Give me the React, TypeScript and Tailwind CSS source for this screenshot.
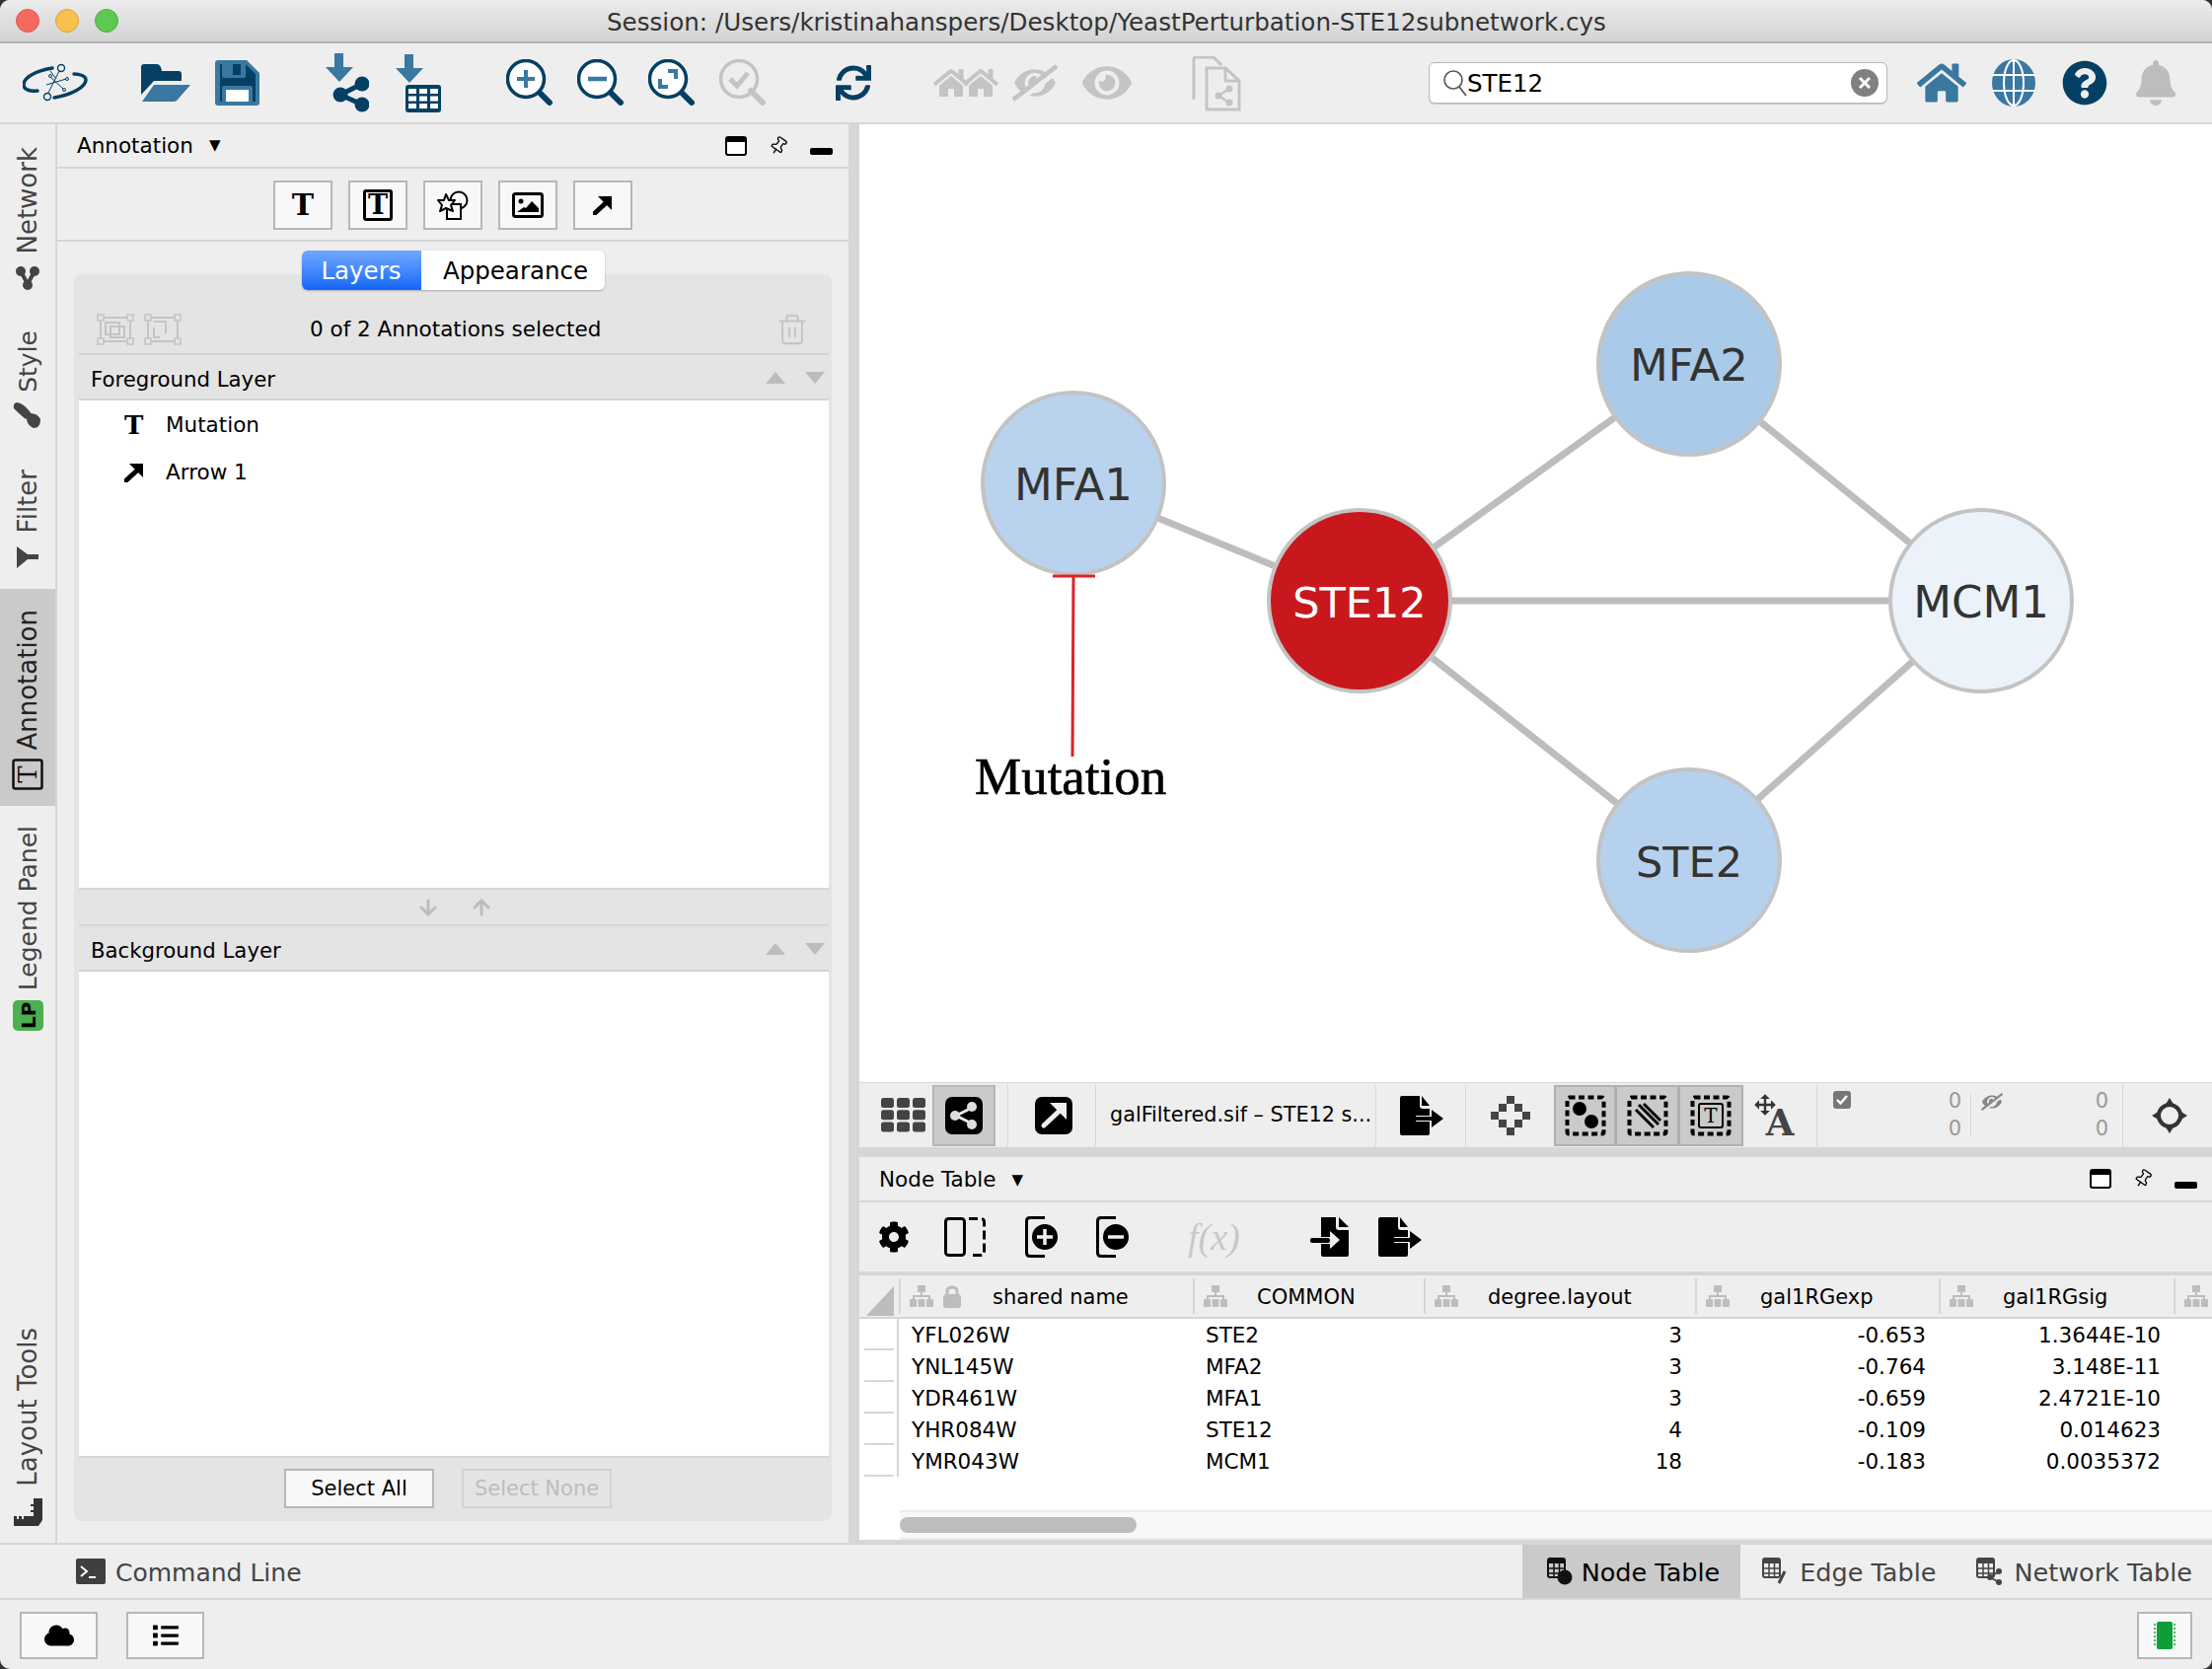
import type { ReactNode } from "react";
import { ArrowDown, ArrowUp, Pin, Trash2 } from "lucide-react";
import {
  FaBell,
  FaCloud,
  FaCog,
  FaEye,
  FaEyeSlash,
  FaHome,
  FaList,
  FaQuestionCircle,
  FaSync,
} from "react-icons/fa";

const DARK = "#053f64";
const LIGHT = "#3a78a1";
const GRAY = "#c4c4c4";

function Icon({
  w,
  h,
  className = "",
  children,
}: {
  w: number;
  h: number;
  className?: string;
  children: ReactNode;
}) {
  return (
    <svg width={w} height={h} viewBox={`0 0 ${w} ${h}`} className={`shrink-0 ${className}`}>
      {children}
    </svg>
  );
}

function Logo({ className }: { className?: string }) {
  return (
    <Icon w={66} h={40} className={className}>
      <path d="M30 5 C12 8 1 15 1 22 C1 27 8 29 15 28" fill="none" stroke={DARK} strokeWidth="3.5" strokeLinecap="round" />
      <path d="M32 35 C50 32 64 24 64 17 C64 13 58 11 52 11" fill="none" stroke={DARK} strokeWidth="3.5" strokeLinecap="round" />
      <path d="M25 32 L38 6 M28 14 L41 26 M24 22 L44 16 M34 16 L28 8" stroke={DARK} strokeWidth="1" fill="none" />
      <circle cx="39" cy="5" r="3.5" fill="#eee" stroke={DARK} strokeWidth="1.4" />
      <circle cx="25" cy="34" r="3.5" fill="#eee" stroke={DARK} strokeWidth="1.4" />
      <circle cx="28" cy="13" r="1.5" fill="#eee" stroke={DARK} />
      <circle cx="42" cy="27" r="1.5" fill="#eee" stroke={DARK} />
      <circle cx="45" cy="16" r="1.5" fill="#eee" stroke={DARK} />
    </Icon>
  );
}

function FolderIcon({ className }: { className?: string }) {
  return (
    <Icon w={50} h={38} className={className}>
      <path d="M0 3 Q0 0 3 0 H16 Q20 0 21 7 H38 Q41 7 41 10 V17 H13 L0 31 Z" fill={DARK} />
      <path d="M13 21 H50 L37 36 Q36 38 33 38 H1 Z" fill={LIGHT} />
    </Icon>
  );
}

function SaveIcon({ className }: { className?: string }) {
  return (
    <Icon w={45} h={46} className={className}>
      <path d="M3 0 H32 L45 13 V43 Q45 46 42 46 H3 Q0 46 0 43 V3 Q0 0 3 0 Z" fill={LIGHT} />
      <path d="M5 4 H31 L41 14 V42 H5 Z" fill={DARK} />
      <rect x="7" y="0" width="24" height="18" rx="2" fill={LIGHT} />
      <rect x="18" y="4" width="8" height="11" fill={DARK} />
      <rect x="7" y="26" width="31" height="20" rx="2" fill={LIGHT} />
      <rect x="11" y="30" width="23" height="12" fill="#fff" />
    </Icon>
  );
}

function DownArrow({ x = 0, y = 0 }: { x?: number; y?: number }) {
  return <path d={`M${x + 9} ${y} H${x + 18} V${y + 14} H${x + 28} L${x + 14} ${y + 29} L${x} ${y + 14} H${x + 9} Z`} fill={LIGHT} />;
}

function ImportNetworkIcon({ className }: { className?: string }) {
  return (
    <Icon w={44} h={60} className={className}>
      <DownArrow />
      <path d="M15 42 L37 31 M15 42 L37 52" stroke={DARK} strokeWidth="5" />
      <circle cx="15" cy="42" r="7.5" fill={DARK} />
      <circle cx="37" cy="31" r="7.5" fill={DARK} />
      <circle cx="37" cy="52" r="7.5" fill={DARK} />
    </Icon>
  );
}

function ImportTableIcon({ className }: { className?: string }) {
  const cells = [0, 1, 2];
  return (
    <Icon w={47} h={60} className={className}>
      <DownArrow />
      <rect x="10" y="31" width="36" height="28" rx="3" fill={DARK} />
      {cells.map((r) =>
        cells.map((c) => <rect key={`${r}${c}`} x={13 + c * 11} y={35 + r * 7.5} width="8" height="5" fill="#fff" />),
      )}
    </Icon>
  );
}

function Magnifier({ color, className, children }: { color: string; className?: string; children: ReactNode }) {
  return (
    <Icon w={48} h={48} className={className}>
      <path d="M32 32 L44 44" stroke={color} strokeWidth="6" strokeLinecap="round" />
      <circle cx="20" cy="20" r="18.5" fill={color === DARK ? "#fff" : "none"} stroke={color} strokeWidth="3.5" />
      {children}
    </Icon>
  );
}

function GlobeIcon({ className }: { className?: string }) {
  return (
    <Icon w={46} h={48} className={className}>
      <ellipse cx="23" cy="24" rx="22" ry="24" fill={LIGHT} />
      <ellipse cx="23" cy="24" rx="10" ry="23" fill="none" stroke="#fff" strokeWidth="2" />
      <path d="M23 0 V48 M1 16 H45 M1 32 H45" stroke="#fff" strokeWidth="2" />
    </Icon>
  );
}

function DocShareIcon({ className }: { className?: string }) {
  return (
    <Icon w={50} h={56} className={className}>
      <path d="M2 44 V3 Q2 1 4 1 H22 L30 9" fill="none" stroke={GRAY} strokeWidth="3" />
      <path d="M15 12 H34 L48 25 V54 H15 Z" fill="#eee" stroke={GRAY} strokeWidth="3" />
      <path d="M34 12 V25 H48" fill="none" stroke={GRAY} strokeWidth="3" />
      <path d="M27 40 L38 33 M27 40 L38 47" stroke={GRAY} strokeWidth="2.5" />
      <circle cx="27" cy="40" r="3.5" fill={GRAY} />
      <circle cx="38" cy="33" r="3.5" fill={GRAY} />
      <circle cx="38" cy="47" r="3.5" fill={GRAY} />
    </Icon>
  );
}

function MainToolbar() {
  return (
    <div className="flex h-[82px] shrink-0 items-center border-b-2 border-[#d6d6d6] bg-[#eeeeee]">
      <Logo className="ml-[23px]" />
      <FolderIcon className="ml-[54px]" />
      <SaveIcon className="ml-[25px]" />
      <ImportNetworkIcon className="ml-[67px]" />
      <ImportTableIcon className="ml-[27px] mt-[2px]" />
      <Magnifier color={DARK} className="ml-[65px]">
        <path d="M20 11 V29 M11 20 H29" stroke={LIGHT} strokeWidth="4" />
      </Magnifier>
      <Magnifier color={DARK} className="ml-[24px]">
        <path d="M11 20 H30" stroke={LIGHT} strokeWidth="4.5" />
      </Magnifier>
      <Magnifier color={DARK} className="ml-[24px]">
        <path d="M20 12 H28 V20 M12 20 V28 H20" fill="none" stroke={LIGHT} strokeWidth="4" />
      </Magnifier>
      <Magnifier color={GRAY} className="ml-[24px]">
        <path d="M11 20 L18 27 L29 14" fill="none" stroke={GRAY} strokeWidth="5" />
      </Magnifier>
      <FaSync size={36} color={DARK} className="ml-[70px] shrink-0" />
      <div className="ml-[63px] flex w-[66px] shrink-0">
        <FaHome size={36} color={GRAY} className="shrink-0" />
        <FaHome size={36} color={GRAY} className="-ml-[6px] shrink-0" />
      </div>
      <FaEyeSlash size={46} color={GRAY} className="ml-[14px] shrink-0 -scale-x-100" />
      <FaEye size={50} color={GRAY} className="ml-[25px] shrink-0" />
      <DocShareIcon className="ml-[61px] mt-[2px]" />
      <div className="ml-[190px] flex h-[42px] w-[465px] shrink-0 items-center rounded-[6px] border border-[#b8b8b8] bg-white pl-[12px] pr-[8px] shadow-[0_1px_0_#ccc]">
        <svg width="28" height="32" viewBox="0 0 28 32" className="shrink-0">
          <circle cx="12" cy="13" r="9" fill="none" stroke="#555" strokeWidth="1.6" />
          <path d="M18 20 L25 29" stroke="#555" strokeWidth="1.8" />
        </svg>
        <span className="-ml-[2px] pt-[2px] text-[24.5px] leading-none text-black">STE12</span>
        <span className="relative ml-auto flex h-[28px] w-[28px] items-center justify-center rounded-full bg-[#808080]">
          <svg width="14" height="14" viewBox="0 0 14 14">
            <path d="M2 2 L12 12 M12 2 L2 12" stroke="#fff" strokeWidth="3" />
          </svg>
        </span>
      </div>
      <FaHome size={50} color={LIGHT} className="ml-[30px] shrink-0" />
      <GlobeIcon className="ml-[25px]" />
      <FaQuestionCircle size={46} color={DARK} className="ml-[26px] shrink-0" />
      <FaBell size={46} color="#bdbdbd" className="ml-[26px] shrink-0" />
    </div>
  );
}

function RailTab({
  label,
  icon,
  className = "",
  textClass = "text-[26px] text-[#444]",
}: {
  label: string;
  icon: ReactNode;
  className?: string;
  textClass?: string;
}) {
  return (
    <div className={`flex shrink-0 flex-col-reverse items-center ${className}`}>
      {icon}
      <span className={`rotate-180 whitespace-nowrap leading-none [writing-mode:vertical-rl] ${textClass}`}>{label}</span>
    </div>
  );
}

function Rail() {
  return (
    <div className="flex w-[58px] shrink-0 flex-col border-r-2 border-[#d6d6d6] bg-[#eeeeee]">
      <RailTab
        label="Network"
        className="mt-[24px] h-[144px] gap-[12px]"
        icon={
          <Icon w={26} h={24} className="shrink-0">
            <path d="M6 5 L13 18 M20 5 L13 18" stroke="#444" strokeWidth="4" />
            <circle cx="6" cy="5" r="5" fill="#444" />
            <circle cx="20" cy="5" r="5" fill="#444" />
            <circle cx="13" cy="19" r="5" fill="#444" />
          </Icon>
        }
      />
      <RailTab
        label="Style"
        textClass="text-[25px] text-[#444]"
        className="mt-[42px] h-[98px] gap-[10px]"
        icon={
          <Icon w={30} h={26} className="shrink-0">
            <path d="M3 0 Q10 0 17 9 L19 12 L13 17 Q7 12 1 6 Q0 2 3 0 Z" fill="#444" />
            <path d="M18 11 Q25 11 28 17 Q28 26 21 26 Q14 23 14 16 Z" fill="#444" />
          </Icon>
        }
      />
      <RailTab
        label="Filter"
        className="mt-[42px] h-[100px] gap-[14px]"
        icon={
          <Icon w={22} h={22} className="shrink-0">
            <path d="M0 0 L11 8 H22 V13 H11 L0 22 Z" fill="#444" />
          </Icon>
        }
      />
      <RailTab
        label="Annotation"
        textClass="text-[26px] text-[#222]"
        className="mt-[21px] h-[220px] gap-[8px] bg-[#cacaca] pb-[16px]"
        icon={
          <Icon w={32} h={32} className="shrink-0">
            <rect x="1.5" y="1.5" width="29" height="29" rx="2" fill="none" stroke="#111" strokeWidth="2.5" />
            <text x="16" y="16" fontSize="26" fontFamily="'DejaVu Serif', serif" fill="#111" textAnchor="middle" transform="rotate(-90 16 16)" dominantBaseline="central">
              T
            </text>
          </Icon>
        }
      />
      <RailTab
        label="Legend Panel"
        textClass="text-[25px] text-[#444]"
        className="mt-[24px] h-[204px] gap-[10px]"
        icon={
          <span className="flex h-[31px] w-[31px] shrink-0 rotate-180 items-center justify-center rounded-[5px] bg-[#4caf50] text-[20px] font-bold leading-none text-black [writing-mode:vertical-rl]">
            LP
          </span>
        }
      />
      <RailTab
        label="Layout Tools"
        className="mb-[17px] mt-auto h-[200px] gap-[12px]"
        icon={
          <Icon w={29} h={28} className="shrink-0">
            <path d="M0 28 V18 H3 V21 H5 V18 H8 V21 H10 V18 H20 V14 H17 V12 H20 V8 H17 V6 H20 V0 H29 V22 L25 28 Z" fill="#333" />
          </Icon>
        }
      />
    </div>
  );
}

function WindowControls({ className = "" }: { className?: string }) {
  return (
    <div className={`flex items-center ${className}`}>
      <Icon w={22} h={20}>
        <rect x="1" y="1" width="20" height="18" rx="2" fill="#fff" stroke="#000" strokeWidth="2" />
        <rect x="1" y="1" width="20" height="5" fill="#000" />
      </Icon>
      <Pin size={20} strokeWidth={1.6} color="#000" className="ml-[22px] rotate-[35deg]" />
      <span className="ml-[22px] mt-[12px] block h-[7px] w-[23px] rounded-[2px] bg-black" />
    </div>
  );
}

function ToolButton({ children }: { children: ReactNode }) {
  return (
    <div className="flex h-[50px] w-[60px] items-center justify-center border-2 border-[#b7b7b7] bg-[#f8f8f8]">
      {children}
    </div>
  );
}

const serifT = "font-['DejaVu_Serif',serif] font-bold text-black leading-none";

function ArrowGlyph({ size = 20 }: { size?: number }) {
  return (
    <svg width={size} height={size} viewBox="0 0 20 20">
      <path d="M2 18 L15 6" stroke="#000" strokeWidth="5" strokeLinecap="round" />
      <path d="M5 1 H19 V15 Z" fill="#000" />
    </svg>
  );
}

function LayerHeader({ title }: { title: string }) {
  return (
    <div className="flex h-[46px] shrink-0 items-center border-b-2 border-[#d2d2d2] pl-[12px] pr-[4px] text-[21.25px] leading-none text-black">
      <span className="mt-[6px]">{title}</span>
      <span className="ml-auto mt-[2px] h-0 w-0 border-x-[10px] border-b-[12px] border-x-transparent border-b-[#bcbcbc]" />
      <span className="ml-[20px] mt-[2px] h-0 w-0 border-x-[10px] border-t-[12px] border-x-transparent border-t-[#bcbcbc]" />
    </div>
  );
}

function GroupIcon({ ungroup, className = "" }: { ungroup?: boolean; className?: string }) {
  return (
    <Icon w={38} h={32} className={className}>
      <rect x="4" y="4" width="30" height="24" fill="none" stroke={GRAY} strokeWidth="2" />
      {[
        [1, 1],
        [31, 1],
        [1, 25],
        [31, 25],
      ].map(([x, y]) => (
        <rect key={`${x}${y}`} x={x} y={y} width="6" height="6" fill="#e4e4e4" stroke={GRAY} strokeWidth="1.5" />
      ))}
      {ungroup ? (
        <path d="M10 8 H22 V20 M16 24 H10 V14" fill="none" stroke={GRAY} strokeWidth="2" />
      ) : (
        <>
          <rect x="9" y="9" width="14" height="12" fill="none" stroke={GRAY} strokeWidth="2" />
          <rect x="14" y="13" width="14" height="11" fill="none" stroke={GRAY} strokeWidth="2" />
        </>
      )}
    </Icon>
  );
}

function AnnotationPanel() {
  return (
    <div className="flex w-[802px] shrink-0 flex-col bg-[#eeeeee]">
      <div className="flex h-[45px] shrink-0 items-center border-b-2 border-[#d6d6d6] pl-[20px] pr-[16px] text-[21.500px] leading-none text-black">
        <span>Annotation</span>
        <span className="ml-[16px] text-[15px]">▼</span>
        <WindowControls className="ml-auto" />
      </div>
      <div className="flex h-[74px] shrink-0 items-center justify-center gap-[16px] border-b-2 border-[#d6d6d6] pt-[1px]">
        <ToolButton>
          <span className={`text-[30px] ${serifT}`}>T</span>
        </ToolButton>
        <ToolButton>
          <span className={`flex h-[32px] w-[30px] items-center justify-center rounded-[3px] border-[3px] border-black text-[27px] ${serifT}`}>T</span>
        </ToolButton>
        <ToolButton>
          <Icon w={32} h={30}>
            <circle cx="22" cy="10" r="8.5" fill="none" stroke="#000" strokeWidth="2" />
            <rect x="10" y="14" width="14" height="15" fill="#f8f8f8" stroke="#000" strokeWidth="2" />
            <path d="M9 4 L12 10 L18 10 L14 15 L16 21 L9 18 L3 21 L5 15 L1 10 L7 10 Z" fill="#f8f8f8" stroke="#000" strokeWidth="2" strokeLinejoin="round" />
          </Icon>
        </ToolButton>
        <ToolButton>
          <Icon w={32} h={26}>
            <rect x="1.5" y="1.5" width="29" height="23" rx="2" fill="none" stroke="#000" strokeWidth="3" />
            <circle cx="9" cy="9" r="2.5" fill="#000" />
            <path d="M5 20 L12 15 L14 16 L20 9 L27 16 V20 Z" fill="#000" />
          </Icon>
        </ToolButton>
        <ToolButton>
          <ArrowGlyph />
        </ToolButton>
      </div>
      <div className="flex min-h-0 flex-1 flex-col px-[17px] pb-[22px] pt-[9px]">
        <div className="relative z-10 -mb-[16px] flex h-[40px] w-[307px] shrink-0 self-center overflow-hidden rounded-[6px] text-[24.5px] leading-none shadow-[0_1px_2px_#aaa]">
          <span className="flex w-[121px] items-center justify-center bg-gradient-to-b from-[#6fa8ff] to-[#0f66f6] pt-[2px] text-white">Layers</span>
          <span className="flex flex-1 items-center justify-center bg-white pl-[6px] pt-[2px] text-black">Appearance</span>
        </div>
        <div className="flex min-h-0 flex-1 flex-col rounded-[8px] bg-[#e4e4e4] pl-[5px] pr-[3px] pt-[32px]">
          <div className="flex h-[50px] shrink-0 items-center border-b-2 border-[#d2d2d2] pl-[18px] pr-[20px] text-[21.500px] leading-none text-black">
            <GroupIcon />
            <GroupIcon ungroup className="ml-[10px]" />
            <span className="ml-[130px]">0 of 2 Annotations selected</span>
            <Trash2 size={34} strokeWidth={1.4} color={GRAY} className="ml-auto" />
          </div>
          <LayerHeader title="Foreground Layer" />
          <div className="h-[494px] shrink-0 bg-white pl-[46px] pt-[1px] text-[21.500px] leading-none text-black">
            <div className="flex h-[47px] items-center">
              <span className={`w-[42px] text-[26px] ${serifT}`}>T</span>
              <span>Mutation</span>
            </div>
            <div className="flex h-[49px] items-center">
              <span className="w-[42px]">
                <ArrowGlyph />
              </span>
              <span>Arrow 1</span>
            </div>
          </div>
          <div className="flex h-[37px] shrink-0 items-center border-t-2 border-[#d6d6d6] pl-[342px]">
            <ArrowDown size={24} strokeWidth={3} color="#bcbcbc" />
            <ArrowUp size={24} strokeWidth={3} color="#bcbcbc" className="ml-[30px]" />
          </div>
          <div className="border-t-2 border-[#d6d6d6]">
            <LayerHeader title="Background Layer" />
          </div>
          <div className="min-h-0 flex-1 border-b-2 border-[#d6d6d6] bg-white" />
          <div className="flex h-[64px] shrink-0 items-center pb-[2px] pl-[208px] text-[21px] leading-none">
            <span className="flex h-[40px] w-[152px] items-center justify-center border-2 border-[#b7b7b7] bg-[#f8f8f8] text-black">Select All</span>
            <span className="ml-[28px] flex h-[40px] w-[152px] items-center justify-center border-2 border-[#d2d2d2] text-[#bdbdbd]">Select None</span>
          </div>
        </div>
      </div>
    </div>
  );
}

const nodes = [
  { label: "MFA1", x: 1088, y: 490, fill: "#b9d3ee", size: 45 },
  { label: "MFA2", x: 1712, y: 369, fill: "#a9cbe9", size: 45 },
  { label: "STE2", x: 1712, y: 872, fill: "#b6d1ee", size: 43 },
  { label: "MCM1", x: 2008, y: 609, fill: "#ebf2fa", size: 45 },
  { label: "STE12", x: 1378, y: 609, fill: "#c9171e", size: 43 },
];

const edges = [
  [1088, 490, 1378, 609],
  [1378, 609, 1712, 369],
  [1378, 609, 2008, 609],
  [1378, 609, 1712, 872],
  [1712, 369, 2008, 609],
  [1712, 872, 2008, 609],
];

function NetworkCanvas() {
  return (
    <div className="h-[971px] shrink-0 bg-white">
      <svg width="1371" height="971" viewBox="871 126 1371 971" className="block">
        {edges.map(([x1, y1, x2, y2]) => (
          <line key={`${x1}${y1}${x2}${y2}`} x1={x1} y1={y1} x2={x2} y2={y2} stroke="#bdbdbd" strokeWidth="7" />
        ))}
        {nodes.map((n) => (
          <g key={n.label}>
            <circle cx={n.x} cy={n.y} r="92" fill={n.fill} stroke="#c3c3c3" strokeWidth="4" />
            <text
              x={n.x}
              y={n.y + 17}
              textAnchor="middle"
              fontSize={n.size}
              fontFamily="'DejaVu Sans', sans-serif"
              fill={n.label === "STE12" ? "#ffffff" : "#333333"}
            >
              {n.label}
            </text>
          </g>
        ))}
        <path d="M1088 584 L1087 767 M1067 584 H1110" stroke="#e0202c" strokeWidth="3" fill="none" />
        <text x="988" y="805" fontSize="53" fontFamily="'Liberation Serif', serif" fill="#000" stroke="#000" strokeWidth="0.6">
          Mutation
        </text>
      </svg>
    </div>
  );
}

function ExportIcon({ className = "" }: { className?: string }) {
  return (
    <Icon w={44} h={40} className={className}>
      <path d="M2 0 H20 V10 Q20 13 23 13 H30 V20 H16 V26 H30 V38 Q30 40 28 40 H2 Q0 40 0 38 V2 Q0 0 2 0 Z" fill="#000" />
      <path d="M22 0 L30 10 H22 Z" fill="#000" />
      <path d="M16 21 H32 V14 L44 23 L32 32 V25 H16 Z" fill="#000" />
    </Icon>
  );
}

function ImportIcon({ className = "" }: { className?: string }) {
  return (
    <Icon w={40} h={40} className={className}>
      <path d="M11 0 H26 V10 Q26 13 29 13 H39 V38 Q39 40 37 40 H13 Q11 40 11 38 V27 H20 V32 L30 23 L20 14 V20 H11 Z" fill="#000" />
      <path d="M29 0 L39 10 H29 Z" fill="#000" />
      <rect x="0" y="21" width="20" height="5" rx="2" fill="#000" />
    </Icon>
  );
}

function Separator({ className = "" }: { className?: string }) {
  return <span className={`block h-[62px] w-[1px] shrink-0 bg-[#d6d6d6] ${className}`} />;
}

function DashedBox({ children }: { children: ReactNode }) {
  return (
    <Icon w={42} h={42}>
      <rect x="2.5" y="2.5" width="37" height="37" rx="2" fill="none" stroke="#000" strokeWidth="4" strokeDasharray="6 3.5" />
      {children}
    </Icon>
  );
}

function ViewToolbar() {
  const grid = [0, 1, 2];
  return (
    <div className="flex h-[66px] shrink-0 items-center overflow-hidden border-t border-[#d6d6d6] bg-[#eeeeee]">
      <Icon w={45} h={36} className="ml-[22px]">
        {grid.map((r) =>
          grid.map((c) => <rect key={`${r}${c}`} x={c * 16} y={r * 12.3} width="13" height="10" rx="2.5" fill="#444" />),
        )}
      </Icon>
      <div className="ml-[7px] flex h-[62px] w-[64px] shrink-0 items-center justify-center border-2 border-[#b5b5b5] bg-[#cacaca]">
        <Icon w={38} h={38}>
          <rect width="38" height="38" rx="7" fill="#000" />
          <path d="M11 19 L27 11 M11 19 L27 27" stroke="#eee" strokeWidth="3" />
          <circle cx="10" cy="19" r="5" fill="#ddd" />
          <circle cx="27" cy="10" r="5" fill="#ddd" />
          <circle cx="27" cy="28" r="5" fill="#ddd" />
        </Icon>
      </div>
      <Separator className="ml-[12px]" />
      <Icon w={38} h={38} className="ml-[27px]">
        <rect width="38" height="38" rx="7" fill="#000" />
        <path d="M9 29 L26 13" stroke="#eee" strokeWidth="5" strokeLinecap="round" />
        <path d="M15 6 H32 V23 Z" fill="#eee" />
      </Icon>
      <Separator className="ml-[23px]" />
      <span className="ml-[14px] w-[269px] shrink-0 whitespace-nowrap text-[20.75px] leading-none text-black">galFiltered.sif – STE12 s...</span>
      <Separator />
      <ExportIcon className="ml-[24px]" />
      <Separator className="ml-[22px]" />
      <Icon w={40} h={40} className="ml-[25px]">
        {[
          [16, 0],
          [8, 8],
          [24, 8],
          [0, 16],
          [32, 16],
          [8, 24],
          [24, 24],
          [16, 32],
        ].map(([x, y]) => (
          <rect key={`${x}${y}`} x={x} y={y} width="8" height="8" fill="#444" />
        ))}
      </Icon>
      <div className="ml-[24px] flex h-[62px] w-[192px] shrink-0 border-2 border-[#b0b0b0] bg-[#cacaca]">
        <div className="flex w-[62px] items-center justify-center border-r-[3px] border-[#b0b0b0]">
          <DashedBox>
            <circle cx="15" cy="14" r="7" fill="#000" />
            <circle cx="27" cy="27" r="7" fill="#000" />
          </DashedBox>
        </div>
        <div className="flex w-[64px] items-center justify-center border-r-[3px] border-[#b0b0b0]">
          <DashedBox>
            <path d="M9 15 L27 33 M12 10 L32 30 M17 9 L34 26" stroke="#000" strokeWidth="3" />
          </DashedBox>
        </div>
        <div className="flex flex-1 items-center justify-center">
          <DashedBox>
            <rect x="9" y="9" width="24" height="24" rx="2" fill="none" stroke="#000" strokeWidth="2" />
            <text x="21" y="28" textAnchor="middle" fontSize="20" fontFamily="'DejaVu Serif', serif" fill="#000">
              T
            </text>
          </DashedBox>
        </div>
      </div>
      <Icon w={42} h={46} className="ml-[10px]">
        <path transform="scale(1.2)" d="M10 1 L14 5 H11 V9 H15 V6 L19 10 L15 14 V11 H11 V15 H14 L10 19 L6 15 H9 V11 H5 V14 L1 10 L5 6 V9 H9 V5 H6 Z" fill="#333" />
        <text x="27" y="43" textAnchor="middle" fontSize="37" fontWeight="700" fontFamily="'DejaVu Serif', serif" fill="#444">
          A
        </text>
      </Icon>
      <Separator className="ml-[22px]" />
      <div className="ml-[16px] mt-[8px] flex h-[18px] w-[18px] shrink-0 items-center justify-center self-start rounded-[3px] bg-[#777]">
        <svg width="12" height="10" viewBox="0 0 12 10">
          <path d="M1 5 L4.5 8.5 L11 1" fill="none" stroke="#fff" strokeWidth="2.4" />
        </svg>
      </div>
      <div className="flex w-[112px] shrink-0 flex-col items-end gap-[7px] text-[21px] leading-[21px] text-[#9a9a9a]">
        <span>0</span>
        <span>0</span>
      </div>
      <span className="ml-[9px] block h-[44px] w-[1px] shrink-0 bg-[#d6d6d6]" />
      <FaEyeSlash size={22} color="#888" className="mb-[28px] ml-[10px] shrink-0 -scale-x-100" />
      <div className="flex w-[107px] shrink-0 flex-col items-end gap-[7px] text-[21px] leading-[21px] text-[#9a9a9a]">
        <span>0</span>
        <span>0</span>
      </div>
      <Separator className="ml-[14px]" />
      <Icon w={36} h={36} className="ml-[29px]">
        <circle cx="18" cy="18" r="11" fill="none" stroke="#333" strokeWidth="4" />
        <path d="M18 0 L23 8 H13 Z M18 36 L23 28 H13 Z M0 18 L8 13 V23 Z M36 18 L28 13 V23 Z" fill="#333" />
      </Icon>
    </div>
  );
}

function TreeIcon({ className = "" }: { className?: string }) {
  return (
    <Icon w={24} h={22} className={className}>
      <rect x="8" y="0" width="8" height="7" fill="#bdbdbd" />
      <path d="M12 7 V12 M4 15 V11 H20 V15" stroke="#bdbdbd" strokeWidth="2" fill="none" />
      <rect x="0" y="14" width="7" height="8" rx="1" fill="#bdbdbd" />
      <rect x="8.5" y="14" width="7" height="8" rx="1" fill="#bdbdbd" />
      <rect x="17" y="14" width="7" height="8" rx="1" fill="#bdbdbd" />
    </Icon>
  );
}

const columns = [
  { label: "shared name", cls: "w-[298px]", labelCls: "ml-[32px] mt-[3px]", lock: true },
  { label: "COMMON", cls: "w-[234px]", labelCls: "ml-[30px] mt-[3px]" },
  { label: "degree.layout", cls: "w-[275px]", labelCls: "ml-[30px] mt-[3px]" },
  { label: "gal1RGexp", cls: "w-[247px]", labelCls: "ml-[31px] mt-[3px]" },
  { label: "gal1RGsig", cls: "w-[238px]", labelCls: "ml-[30px] mt-[3px]" },
  { label: "", cls: "flex-1", labelCls: "" },
];

const rows = [
  ["YFL026W", "STE2", "3", "-0.653", "1.3644E-10"],
  ["YNL145W", "MFA2", "3", "-0.764", "3.148E-11"],
  ["YDR461W", "MFA1", "3", "-0.659", "2.4721E-10"],
  ["YHR084W", "STE12", "4", "-0.109", "0.014623"],
  ["YMR043W", "MCM1", "18", "-0.183", "0.0035372"],
];

function NodeTable() {
  return (
    <>
      <div className="flex h-[46px] shrink-0 items-center border-b-2 border-[#d6d6d6] bg-[#eeeeee] pl-[20px] pr-[15px] text-[21.500px] leading-none text-black">
        <span className="mt-[2px]">Node Table</span>
        <span className="ml-[16px] mt-[2px] text-[15px]">▼</span>
        <WindowControls className="ml-auto" />
      </div>
      <div className="flex h-[70px] shrink-0 items-center bg-[#eeeeee]">
        <FaCog size={32} color="#000" className="ml-[19px] shrink-0" />
        <Icon w={42} h={40} className="ml-[35px]">
          <rect x="1.5" y="1.5" width="19" height="37" rx="3" fill="none" stroke="#000" strokeWidth="3" />
          <path d="M25 1.5 H37 Q40.5 1.5 40.5 5 V35 Q40.5 38.5 37 38.5 H25" fill="none" stroke="#000" strokeWidth="3" strokeDasharray="9 4" />
        </Icon>
        <Icon w={34} h={42} className="ml-[40px]">
          <path d="M20 1.5 H5 Q1.5 1.5 1.5 5 V37 Q1.5 40.5 5 40.5 H20" fill="none" stroke="#000" strokeWidth="3" />
          <circle cx="20" cy="21" r="13" fill="#000" />
          <path d="M20 13 V29 M12 21 H28" stroke="#eee" strokeWidth="3.5" />
        </Icon>
        <Icon w={34} h={42} className="ml-[38px]">
          <path d="M20 1.5 H5 Q1.5 1.5 1.5 5 V37 Q1.5 40.5 5 40.5 H20" fill="none" stroke="#000" strokeWidth="3" />
          <circle cx="20" cy="21" r="13" fill="#000" />
          <path d="M12 21 H28" stroke="#eee" strokeWidth="3.5" />
        </Icon>
        <span className="ml-[59px] w-[60px] shrink-0 font-['Liberation_Serif',serif] text-[38px] italic leading-none text-[#c8c8c8]">f(x)</span>
        <ImportIcon className="ml-[64px]" />
        <ExportIcon className="ml-[29px]" />
      </div>
      <div className="h-[4px] shrink-0 bg-[#d6d6d6]" />
      <div className="flex h-[44px] shrink-0 items-center border-b-2 border-[#d6d6d6] bg-[#eeeeee] pl-[1px] text-[21px] leading-none text-black">
        <div className="flex w-[39px] shrink-0 items-end justify-center self-stretch pb-[1px]">
          <span className="block h-0 w-0 border-b-[30px] border-l-[28px] border-b-[#bcbcbc] border-l-transparent" />
        </div>
        {columns.map((c) => (
          <div key={c.label} className={`flex h-[36px] shrink-0 items-center border-l-2 border-[#d6d6d6] pl-[9px] ${c.cls}`}>
            <TreeIcon />
            {c.lock && (
              <Icon w={18} h={23} className="ml-[10px]">
                <rect x="0" y="9" width="18" height="14" rx="3" fill="#bdbdbd" />
                <path d="M4 10 V6 Q4 2 9 2 Q14 2 14 6 V10" fill="none" stroke="#bdbdbd" strokeWidth="3" />
              </Icon>
            )}
            <span className={c.labelCls}>{c.label}</span>
          </div>
        ))}
      </div>
      <div className="flex h-[194px] shrink-0 flex-col bg-white pl-[1px] text-[21.500px] leading-none text-black">
        {rows.map((r) => (
          <div key={r[0]} className="flex h-[32px] shrink-0 items-center">
            <div className="flex h-full w-[39px] shrink-0 items-end border-r-2 border-[#d6d6d6] pl-[4px] pr-[3px]">
              <span className="block h-[2px] w-full bg-[#d6d6d6]" />
            </div>
            <span className="w-[298px] shrink-0 pl-[13px] pt-[2px]">{r[0]}</span>
            <span className="w-[234px] shrink-0 pl-[13px] pt-[2px]">{r[1]}</span>
            <span className="w-[275px] shrink-0 pr-[13px] pt-[2px] text-right">{r[2]}</span>
            <span className="w-[247px] shrink-0 pr-[13px] pt-[2px] text-right">{r[3]}</span>
            <span className="w-[238px] shrink-0 pr-[13px] pt-[2px] text-right">{r[4]}</span>
          </div>
        ))}
      </div>
      <div className="flex h-[30px] shrink-0 bg-white pl-[41px]">
        <div className="flex flex-1 items-center border-y-2 border-[#ececec] bg-[#f8f8f8]">
          <span className="block h-[16px] w-[240px] rounded-full bg-[#bdbdbd]" />
        </div>
      </div>
    </>
  );
}

function TableGlyph({ color, children }: { color: string; children?: ReactNode }) {
  return (
    <Icon w={27} h={28} className="shrink-0">
      <rect x="1" y="1" width="17" height="19" rx="2" fill="none" stroke={color} strokeWidth="2" />
      <rect x="1" y="1" width="17" height="5" fill={color} />
      <path d="M1 11 H18 M1 16 H18 M7 6 V20 M12.500 6 V20" stroke={color} strokeWidth="1.5" />
      {children}
    </Icon>
  );
}

export default function App() {
  return (
    <div className="h-[1692px] w-[2242px] overflow-hidden bg-[#333] font-['DejaVu_Sans',sans-serif]">
      <div className="flex h-full flex-col overflow-hidden rounded-[10px] bg-[#eeeeee]">
        <div className="flex h-[44px] shrink-0 items-center border-b-2 border-[#b2b2b2] bg-gradient-to-b from-[#ececec] to-[#d3d3d3] pl-[16px]">
          <span className="h-[24px] w-[24px] rounded-full border border-[#dc5a50] bg-[#f46a5e]" />
          <span className="ml-[16px] h-[24px] w-[24px] rounded-full border border-[#dca33c] bg-[#f8c04e]" />
          <span className="ml-[16px] h-[24px] w-[24px] rounded-full border border-[#4eaa45] bg-[#5fc853]" />
          <span className="ml-[495px] mt-[4px] whitespace-nowrap text-[24.600px] leading-none text-[#333]">
            Session: /Users/kristinahanspers/Desktop/YeastPerturbation-STE12subnetwork.cys
          </span>
        </div>
        <MainToolbar />
        <div className="flex h-[1440px] shrink-0 border-b-2 border-[#d6d6d6]">
          <Rail />
          <AnnotationPanel />
          <div className="w-[11px] shrink-0 bg-[#d6d6d6]" />
          <div className="flex min-w-0 flex-1 flex-col bg-[#d6d6d6]">
            <NetworkCanvas />
            <ViewToolbar />
            <div className="h-[10px] shrink-0 bg-[#d6d6d6]" />
            <NodeTable />
          </div>
        </div>
        <div className="flex h-[56px] shrink-0 items-stretch border-b-2 border-[#d6d6d6] text-[25px] leading-none text-[#444]">
          <div className="ml-[77px] flex items-center">
            <span className="flex h-[26px] w-[30px] items-center rounded-[2px] bg-[#3f3f3f] pl-[4px]">
              <svg width="20" height="16" viewBox="0 0 20 16">
                <path d="M1 3 L7 8 L1 13" fill="none" stroke="#fff" strokeWidth="2" />
                <path d="M9 14 H16" stroke="#fff" strokeWidth="2" />
              </svg>
            </span>
            <span className="ml-[10px] pt-[3px]">Command Line</span>
          </div>
          <div className="ml-auto flex items-center bg-[#cacaca] pl-[25px] pr-[21px] text-[25.500px] text-black">
            <TableGlyph color="#111">
              <circle cx="18" cy="20" r="7.5" fill="#111" />
            </TableGlyph>
            <span className="ml-[8px] pt-[3px]">Node Table</span>
          </div>
          <div className="ml-[22px] flex items-center text-[25.500px]">
            <TableGlyph color="#444">
              <path d="M23 14 L17 26" stroke="#444" strokeWidth="3" />
            </TableGlyph>
            <span className="ml-[11px] pt-[3px]">Edge Table</span>
          </div>
          <div className="ml-[41px] mr-[20px] flex items-center text-[25.500px]">
            <TableGlyph color="#444">
              <circle cx="14" cy="20" r="3" fill="#444" />
              <circle cx="23" cy="14" r="3" fill="#444" />
              <circle cx="23" cy="25" r="3" fill="#444" />
              <path d="M14 20 L23 14 M14 20 L23 25" stroke="#444" strokeWidth="2" />
            </TableGlyph>
            <span className="ml-[11px] pt-[3px]">Network Table</span>
          </div>
        </div>
        <div className="flex flex-1 items-center pl-[20px] pr-[20px] pt-[2px]">
          <div className="flex h-[48px] w-[79px] items-center justify-center border-2 border-[#b7b7b7] bg-[#f8f8f8]">
            <FaCloud size={30} color="#000" />
          </div>
          <div className="ml-[29px] flex h-[48px] w-[79px] items-center justify-center border-2 border-[#b7b7b7] bg-[#f8f8f8]">
            <FaList size={26} color="#000" />
          </div>
          <div className="ml-auto flex h-[48px] w-[56px] items-center justify-center border-2 border-[#b7b7b7] bg-[#f8f8f8]">
            <Icon w={22} h={28}>
              <rect x="3" y="0" width="16" height="28" rx="2" fill="#0f9d3a" />
              <path d="M1 2 V26 M21 2 V26" stroke="#0f9d3a" strokeWidth="1.5" strokeDasharray="2 2" />
            </Icon>
          </div>
        </div>
      </div>
    </div>
  );
}
